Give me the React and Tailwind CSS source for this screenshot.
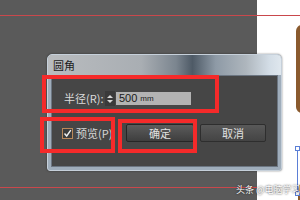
export default function App() {
  const cjk = { fontFamily: '"Noto Sans CJK SC", "Liberation Sans", sans-serif' }
  return (
    <div className="relative w-[300px] h-[200px] overflow-hidden flex" style={cjk}>
      {/* canvas */}
      <div className="w-[257px] h-full bg-[#5a5a5a]" />
      <div className="flex-1 h-full bg-white" />

      {/* guide lines */}
      <div className="absolute left-0 top-[15px] w-[300px] h-px bg-[#c9484c]" />
      <div className="absolute left-0 top-[187px] w-[257px] h-px bg-[#c9484c]" />

      {/* brown artwork at right */}
      <div className="absolute left-[296px] top-[25px] w-[10px] h-[88px] rounded-l-[6px] bg-[#8a5a2e]" />
      <div className="absolute left-[298px] top-[183px] w-[10px] h-[20px] rounded-tl-[6px] bg-[#8a5a2e]" />

      {/* selection */}
      <div className="absolute left-[297px] top-[148px] w-px h-[45px] bg-[#5b7fd6]" />
      <div className="absolute left-[295px] top-[146px] w-[5px] h-[5px] bg-white border border-[#5b7fd6]" />
      <div className="absolute left-[295px] top-[191px] w-[5px] h-[5px] bg-white border border-[#5b7fd6]" />

      {/* dialog */}
      <div className="absolute left-[47px] top-[54px] w-[235px] h-[117px] flex flex-col rounded-t-[5px] rounded-b-[3px] border border-[#c6d0da] bg-[#9fadbb] shadow-[0_0_2px_rgba(0,0,0,0.5)]">
        <div className="h-[20px] flex items-center pl-[5px] rounded-t-[4px] bg-[linear-gradient(90deg,#b9bcbf_0%,#a9aeb3_40%,#7b858f_55%,#4e5a66_62%,#8e9aa6_72%,#aeb6bd_85%,#d3dde6_95%,#dfe7ee_100%)]">
          <span className="text-[11px] leading-none text-[#1c1c1c]">圆角</span>
        </div>
        <div className="flex-1 mx-[3px] mb-[3px] border border-[#6c7682] bg-[#464646] flex flex-col">
          <div className="flex items-center mt-[15px] pl-[12px] h-[15px]">
            <span className="text-[11px] leading-none text-[#dcdcdc] w-[41px]">半径(R):</span>
            <div className="w-[10px] h-[15px] bg-[#3a3a3a] flex flex-col items-center justify-center gap-[2px]">
              <span className="block w-0 h-0 border-x-[3px] border-x-transparent border-b-[3px] border-b-[#d8d8d8]" />
              <span className="block w-0 h-0 border-x-[3px] border-x-transparent border-t-[3px] border-t-[#d8d8d8]" />
            </div>
            <div className="ml-px w-[75px] h-[13px] bg-[#b3b3b3] flex items-center pl-[3px] gap-[3px]">
              <span className="text-[11px] leading-none text-[#1a1a1a]" style={{ fontFamily: '"Liberation Sans", sans-serif' }}>500</span>
              <span className="text-[8px] leading-none text-[#1a1a1a]" style={{ fontFamily: '"Liberation Sans", sans-serif' }}>mm</span>
            </div>
          </div>
          <div className="flex items-center mt-[18px] h-[18px]">
            <div className="ml-[10px] w-[11px] h-[11px] border border-[#b9885a] bg-[#3c3c3c] flex items-center justify-center">
              <svg width="9" height="9" viewBox="0 0 9 9">
                <path d="M1.5 4.5 L3.7 7 L7.8 1.2" fill="none" stroke="#f0f0f0" strokeWidth="1.4" />
              </svg>
            </div>
            <span className="ml-[3px] text-[11px] leading-none text-[#d6d6d6] w-[40px]">预览(P)</span>
            <button className="ml-[10px] w-[68px] h-[18px] border border-[#262626] rounded-[2px] bg-[linear-gradient(#5c5c5c,#3e3e3e)] text-[11px] leading-none text-[#e0e0e0]">确定</button>
            <button className="ml-[6px] w-[66px] h-[18px] border border-[#2e2e2e] rounded-[2px] bg-[linear-gradient(#595959,#444444)] text-[11px] leading-none text-[#e0e0e0]">取消</button>
          </div>
        </div>
      </div>

      {/* annotation boxes */}
      <div className="absolute left-[42px] top-[75px] w-[177px] h-[38px] border-[4px] border-[#f52a2a]" />
      <div className="absolute left-[40px] top-[117px] w-[75px] h-[36px] border-[4px] border-[#f52a2a]" />
      <div className="absolute left-[118px] top-[119px] w-[79px] h-[34px] border-[4px] border-[#f52a2a]" />

      {/* watermark */}
      <div className="absolute left-[236px] top-[185px] text-[9px] leading-none whitespace-nowrap text-white [text-shadow:0_0_2px_rgba(0,0,0,0.9)]">头条 @电脑学习</div>
    </div>
  )
}
